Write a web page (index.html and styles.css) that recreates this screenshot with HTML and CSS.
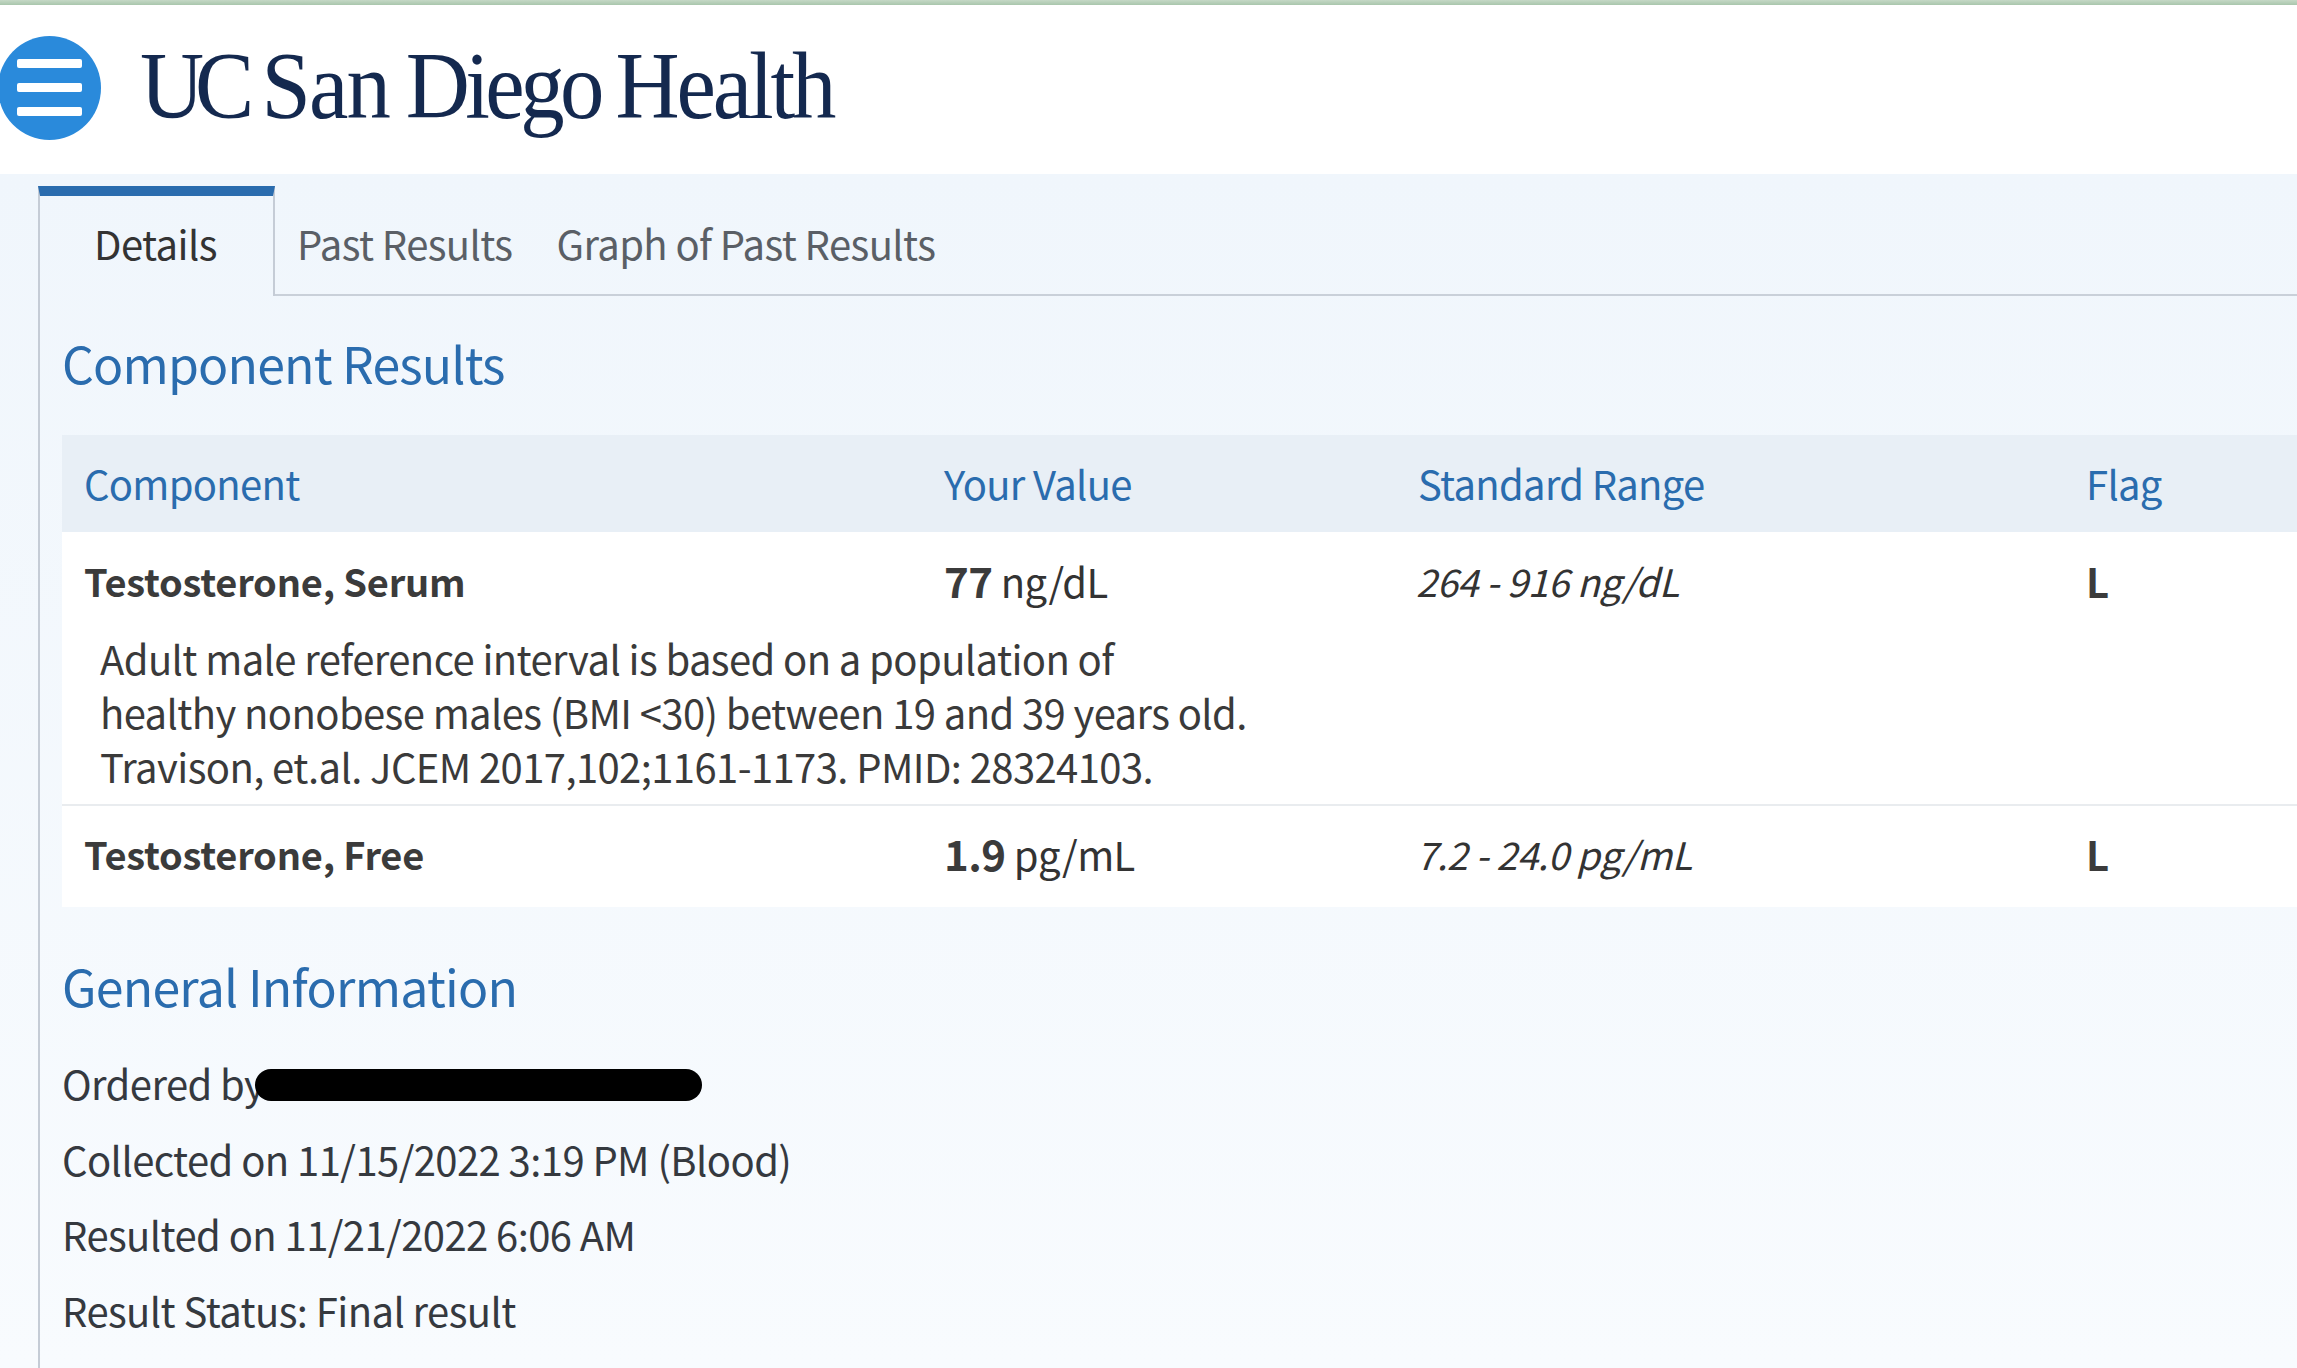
FILE: index.html
```html
<!DOCTYPE html>
<html lang="en">
<head>
<meta charset="utf-8">
<title>Test Details</title>
<link rel="stylesheet" href="styles.css">
</head>
<body>
<div class="topline"></div>
<header class="header">
  <button class="menu" aria-label="Menu"><span></span><span></span><span></span></button>
  <div class="logo"><span class="w-uc">UC</span> <span class="w-san">San</span> <span class="w-diego">Diego</span> <span class="w-health">Health</span></div>
</header>
<main class="main">
  <div class="panel">
    <nav class="tabs">
      <div class="tab active">Details</div>
      <div class="tab first">Past Results</div>
      <div class="tab">Graph of Past Results</div>
      <div class="tabfill"></div>
    </nav>
    <h2 class="h1">Component Results</h2>
    <table class="results">
      <colgroup><col class="c1"><col class="c2"><col class="c3"><col class="c4"></colgroup>
      <thead>
        <tr><th>Component</th><th>Your Value</th><th>Standard Range</th><th>Flag</th></tr>
      </thead>
      <tbody>
        <tr class="r1">
          <td class="name">Testosterone, Serum</td>
          <td class="val"><b>77</b> ng/dL</td>
          <td class="range">264 - 916 ng/dL</td>
          <td class="flag">L</td>
        </tr>
        <tr class="note">
          <td colspan="4">Adult male reference interval is based on a population of<br>healthy nonobese males (BMI &lt;30) between 19 and 39 years old.<br>Travison, et.al. JCEM 2017,102;1161-1173. PMID: 28324103.</td>
        </tr>
        <tr class="r2">
          <td class="name">Testosterone, Free</td>
          <td class="val"><b>1.9</b> pg/mL</td>
          <td class="range">7.2 - 24.0 pg/mL</td>
          <td class="flag">L</td>
        </tr>
      </tbody>
    </table>
    <h2 class="h2">General Information</h2>
    <p class="info ordered">Ordered by<span class="redact"></span></p>
    <p class="info">Collected on 11/15/2022 3:19 PM (Blood)</p>
    <p class="info">Resulted on 11/21/2022 6:06 AM</p>
    <p class="info">Result Status: Final result</p>
  </div>
</main>
</body>
</html>
```
FILE: styles.css
```css
* { box-sizing: border-box; }
html, body { margin: 0; height: 100%; }
body {
  width: 2297px;
  height: 1368px;
  overflow: hidden;
  font-family: "Noto Sans CJK SC", "Noto Sans", sans-serif;
  color: #333;
  background: #fff;
  display: flex;
  flex-direction: column;
}
.topline { height: 5px; background: linear-gradient(#c5d8c6, #a9c6ac); flex: none; }
.header {
  height: 169px;
  flex: none;
  background: #fff;
  display: flex;
  align-items: center;
  padding-left: 0;
  padding-bottom: 4px;
}
.menu {
  width: 103px;
  height: 104px;
  margin-left: -2px;
  border: 0;
  padding: 0 19px;
  border-radius: 50%;
  background: #2a8adb;
  display: flex;
  flex-direction: column;
  justify-content: center;
  gap: 15px;
  flex: none;
}
.menu span { display: block; height: 9px; width: 65px; background: #fff; border-radius: 2px; }
.logo {
  margin-left: 39px;
  font-family: "Liberation Serif", serif;
  font-size: 96px;
  line-height: 100px;
  letter-spacing: -5px;
  word-spacing: 2px;
  color: #14294f;
  white-space: nowrap;
  margin-top: -3px;
  transform: scaleX(0.925);
  transform-origin: left center;
}
.w-uc { letter-spacing: -10px; margin-right: -3px; }
.w-san { letter-spacing: -2px; margin-right: -3px; }
.w-diego { letter-spacing: -5px; margin-right: -4px; }
.w-health { letter-spacing: -3.4px; }
.main {
  flex: 1;
  background: linear-gradient(#f0f6fc, #f8fbfe);
  padding: 12px 0 0 38px;
  min-height: 0;
}
.panel { height: 100%; border-left: 2px solid #c5ccd6; position: relative; }
.tabs { display: flex; height: 110px; margin-left: -2px; align-items: stretch; font-size: 40px; }
.tab {
  line-height: 94px;
  padding-top: 10px;
  white-space: nowrap;
  color: #5a5f66;
  letter-spacing: -0.6px;
  border-bottom: 2px solid #c9d0d9;
  padding-left: 44px;
}
.tab.first { padding-left: 22px; }
.tab.active {
  width: 237px;
  padding: 0 0 0 54px;
  color: #333;
  border-top: 10px solid #2a6cae;
  border-left: 2px solid #c5ccd6;
  border-right: 2px solid #c5ccd6;
  border-bottom: 0;
}
.tabfill { flex: 1; border-bottom: 2px solid #c9d0d9; }
.h1, .h2 { margin: 0; font-weight: 400; color: #2a6cae; font-size: 50px; letter-spacing: -0.85px; padding-left: 22px; }
.h1 { line-height: 70px; margin-top: 31px; }
.h2 { line-height: 70px; margin-top: 43px; letter-spacing: -0.75px; }
.results { border-collapse: collapse; table-layout: fixed; width: 2235px; margin: 38px 0 0 22px; font-size: 40px; letter-spacing: -0.6px; }
.c1 { width: 860px; } .c2 { width: 474px; } .c3 { width: 668px; } .c4 { width: 233px; }
.results th { background: #e8eff6; height: 97px; text-align: left; font-weight: 400; color: #2a6cae; padding: 0 0 2px 22px; letter-spacing: -0.7px; }
.results tbody { background: #fff; }
.results td { padding: 0 0 0 22px; line-height: 54px; }
.r1 td { padding-top: 21px; padding-bottom: 0; }
.note td { padding: 23px 0 11px 38px; color: #3a3a3a; }
.r2 td { border-top: 2px solid #e9ecef; padding-top: 20px; padding-bottom: 26px; }
.results td.name { font-weight: 700; font-size: 38px; letter-spacing: -0.2px; color: #3b3b3b; }
.val { font-size: 40px; }
.val b { font-size: 42px; font-weight: 700; color: #3b3b3b; }
.results td.range { font-style: italic; font-size: 38px; letter-spacing: -0.45px; padding-left: 20px; }
.results td.flag { font-weight: 700; font-size: 40px; color: #3b3b3b; }
.info { margin: 0; padding-left: 22px; font-size: 40px; line-height: 75.7px; letter-spacing: -0.58px; color: #35393f; }
.h2 + .info { margin-top: 26px; }
.ordered { position: relative; }
.redact { position: absolute; left: 215px; top: 23px; width: 447px; height: 32px; border-radius: 16px; background: #000; }
```
